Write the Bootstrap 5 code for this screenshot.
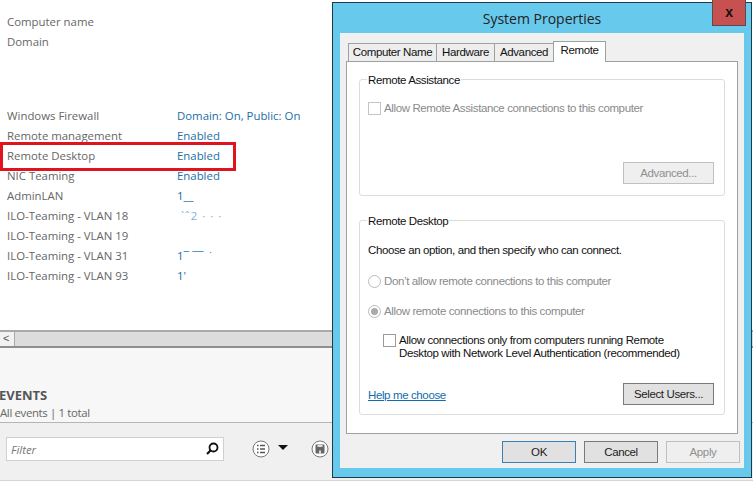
<!DOCTYPE html>
<html lang="en"><head><meta charset="utf-8"><title>System Properties</title>
<link href="https://cdn.jsdelivr.net/npm/bootstrap@5.3.0/dist/css/bootstrap.min.css" rel="stylesheet">
<style>
html,body{height:483px;overflow:hidden;background:#fff}
body{font:11.4px/20px "Open Sans","Noto Sans",sans-serif;color:#666;position:relative}
.info-zone{height:330px;padding-top:12px}
.info-row{height:20px;padding-left:7px}
.info-label{width:170px}
.info-val{color:#1c6ea6}
.info-faint{color:#7fb2d3;letter-spacing:1px}
.marker{position:absolute;left:0;top:142px;width:236px;height:29px;border:3px solid #e0141e}
.scroll-bar{height:18px;background:#dcdcdc;border-top:2px solid #a9a9a9;border-bottom:2px solid #8f8f8f}
.scroll-btn{width:15px;height:14px;background:#f2f2f2;border-right:1px solid #aaa;font:11px/13px "Liberation Sans",sans-serif;color:#555;padding-left:3px}
.events-head{height:75px;background:#f7f7f7;border-bottom:1px solid #b5b5b5;padding-top:37px}
.events-title{font-weight:700;font-size:13px;line-height:20px;color:#555;margin-left:-1px}
.events-sub{line-height:15px;margin-left:0;letter-spacing:-.35px}
.events-tools{height:58px;background:#f0f0f0;border-bottom:1px solid #d4d4d4;padding:14px 0 0 6px}
.filter-box{width:218px;height:24px;background:#fff;border:1px solid #d0d0d0;padding:0 4px;font-style:italic;color:#777;line-height:23px}
.tool-gap{margin-left:28px;margin-top:3px}
.tool-arrow{margin:7px 0 0 7px}
.tool-save{margin:3px 0 0 22px}
.dlg{position:absolute;left:332px;top:2px;width:420px;height:476px;background:#67c9ec;border:1px solid #1f3a4a;color:#111;font:11.5px/15px "Liberation Sans",Arial,sans-serif;letter-spacing:-.38px}
.dlg-title{height:30px;text-align:center;font:14px/32px "Open Sans",sans-serif;letter-spacing:0;color:#222}
.dlg-close{position:absolute;top:-3px;left:379px;width:34px;height:26px;background:#c75050;border:1px solid #5a4a4a;border-top:0;text-align:center;font:700 14px/24px "Liberation Sans",sans-serif;color:#111}
.dlg-body{position:absolute;left:7px;top:30px;width:404px;height:435px;background:#f0f0f0;padding:8px 6px}
.tab-strip{height:20px;align-items:flex-end;padding-left:2px;position:relative;z-index:1;white-space:nowrap}
.tab-item{height:18px;border:1px solid #a0a0a0;border-bottom:0;text-align:center;line-height:17px;margin-right:-1px;background:#eee}
.tab-on{height:21px;margin-bottom:-1px;background:#fff;line-height:16px}
.tab-pane-box{width:392px;height:373px;background:#fff;border:1px solid #a0a0a0;padding:17px 13px 0 12px}
.grp{border:1px solid #dcdcdc;border-radius:3px;position:relative;width:366px}
.grp-a{height:117px}.grp-b{height:195px;margin-top:24px}
.grp-cap{position:absolute;top:-7px;left:7px;padding:0 1px;background:#fff;color:#111;line-height:15px}
.muted-t{color:#8a8a8a}
.w-btn{position:absolute;width:91px;height:22px;background:#e1e1e1;border:1px solid #7a7a7a;text-align:center;line-height:20px;color:#222}
.w-off{background:#efefef;border-color:#c0c0c0;color:#8f8f8f}
.box{position:absolute;width:13px;height:13px;background:#fff;border:1px solid #9b9b9b}
.box-off{border-color:#c4c4c4}
.rad{position:absolute;width:13px;height:13px;border-radius:50%;border:1px solid #bbb;background:#fff}
.rad-dot::after{content:"";position:absolute;left:2px;top:2px;width:7px;height:7px;border-radius:50%;background:#aaa}
.at{position:absolute;white-space:nowrap}
.help-a{color:#0f6cb0;text-decoration:underline}
.foot{position:absolute;left:162px;top:408px;display:flex;gap:8px}
.foot .w-btn{position:static;width:74px;height:22px}
.w-def{border-color:#3d7fb0}
</style></head><body>
<div class="info-zone">
 <div class="info-row d-flex"><span class="info-label">Computer name</span></div>
 <div class="info-row d-flex"><span class="info-label">Domain</span></div>
 <div style="height:54px"></div>
 <div class="info-row d-flex"><span class="info-label">Windows Firewall</span><span class="info-val">Domain: On, Public: On</span></div>
 <div class="info-row d-flex"><span class="info-label">Remote management</span><span class="info-val">Enabled</span></div>
 <div class="info-row d-flex"><span class="info-label">Remote Desktop</span><span class="info-val">Enabled</span></div>
 <div class="info-row d-flex"><span class="info-label">NIC Teaming</span><span class="info-val">Enabled</span></div>
 <div class="info-row d-flex"><span class="info-label">AdminLAN</span><span class="info-val">1__</span></div>
 <div class="info-row d-flex"><span class="info-label">ILO-Teaming - VLAN 18</span><span class="info-faint">&nbsp;`ˆ2 · · ·</span></div>
 <div class="info-row d-flex"><span class="info-label">ILO-Teaming - VLAN 19</span></div>
 <div class="info-row d-flex"><span class="info-label">ILO-Teaming - VLAN 31</span><span class="info-val">1¯ ¯¯ &nbsp;˙</span></div>
 <div class="info-row d-flex"><span class="info-label">ILO-Teaming - VLAN 93</span><span class="info-val">1'</span></div>
</div>
<div class="marker"></div>
<div class="scroll-bar"><div class="scroll-btn">&lt;</div></div>
<div class="events-head"><div class="events-title">EVENTS</div><div class="events-sub">All events | 1 total</div></div>
<div class="events-tools d-flex align-items-start">
 <div class="filter-box d-flex justify-content-between"><span>Filter</span>
  <svg width="14" height="14" viewBox="0 0 14 14" class="mt-1"><circle cx="8.500" cy="5.500" r="4" fill="none" stroke="#111" stroke-width="1.800"/><path d="M5.500 8.500L2 12" stroke="#111" stroke-width="2.200"/></svg></div>
 <svg class="tool-gap" width="18" height="18" viewBox="0 0 18 18"><circle cx="9" cy="9" r="8" fill="#fff" stroke="#777"/><path d="M5 5.500h1.500M8 5.500h5M5 9h1.500M8 9h5M5 12.500h1.500M8 12.500h5" stroke="#555" stroke-width="1.600"/></svg>
 <svg class="tool-arrow" width="12" height="8" viewBox="0 0 12 8"><path d="M1 1h10L6 6z" fill="#111"/></svg>
 <svg class="tool-save" width="18" height="18" viewBox="0 0 18 18"><circle cx="9" cy="9" r="8" fill="#fff" stroke="#777"/><rect x="4.500" y="4.500" width="9" height="9" rx="1" fill="#666"/><rect x="6.500" y="5" width="5" height="2" fill="#ddd"/><rect x="8" y="10.500" width="2" height="3" fill="#ddd"/></svg>
</div>
<div class="dlg">
 <div class="dlg-title">System Properties</div>
 <div class="dlg-close">x</div>
 <div class="dlg-body">
  <div class="tab-strip d-flex">
   <div class="tab-item" style="width:89px">Computer Name</div>
   <div class="tab-item" style="width:59px">Hardware</div>
   <div class="tab-item" style="width:60px">Advanced</div>
   <div class="tab-item tab-on" style="width:53px">Remote</div>
  </div>
  <div class="tab-pane-box">
   <div class="grp grp-a"><span class="grp-cap">Remote Assistance</span>
    <span class="box box-off" style="left:8px;top:22px"></span>
    <span class="at muted-t" style="left:24px;top:21px">Allow Remote Assistance connections to this computer</span>
    <div class="w-btn w-off" style="left:263px;top:82px">Advanced...</div>
   </div>
   <div class="grp grp-b"><span class="grp-cap">Remote Desktop</span>
    <span class="at" style="left:8px;top:22px">Choose an option, and then specify who can connect.</span>
    <span class="rad" style="left:8px;top:54px"></span><span class="at muted-t" style="left:24px;top:53px">Don’t allow remote connections to this computer</span>
    <span class="rad rad-dot" style="left:8px;top:84px"></span><span class="at muted-t" style="left:24px;top:83px">Allow remote connections to this computer</span>
    <span class="box" style="left:23px;top:113px"></span><span class="at" style="left:39px;top:113px;line-height:13px">Allow connections only from computers running Remote<br>Desktop with Network Level Authentication (recommended)</span>
    <a class="at help-a" style="left:8px;top:167px" href="#">Help me choose</a>
    <div class="w-btn" style="left:263px;top:162px">Select Users...</div>
   </div>
  </div>
  <div class="foot"><div class="w-btn w-def">OK</div><div class="w-btn">Cancel</div><div class="w-btn w-off">Apply</div></div>
 </div>
</div>
<script src="https://cdn.jsdelivr.net/npm/bootstrap@5.3.0/dist/js/bootstrap.bundle.min.js"></script>
</body></html>
